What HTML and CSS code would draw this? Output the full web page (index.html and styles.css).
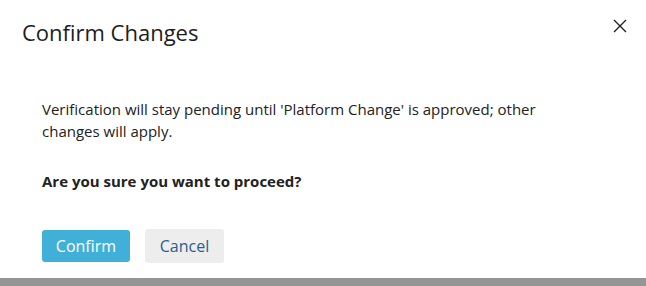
FILE: index.html
```html
<!DOCTYPE html>
<html lang="en">
<head>
    <meta charset="UTF-8">
    <title>Confirm Changes</title>
    <link rel="stylesheet" href="styles.css">
</head>
<body>

<div class="modal">
    <div class="modal-header">
        <h2>Confirm Changes</h2>
        <button class="close-button" aria-label="Close">
            <svg width="14" height="14" viewBox="0 0 14 14">
                <path d="M1 1 L13 13 M13 1 L1 13" stroke="#222" stroke-width="1.4" fill="none"/>
            </svg>
        </button>
    </div>

    <div class="modal-body">
        <p>Verification will stay pending until 'Platform Change' is approved; other changes will apply.</p>
        <p class="question">Are you sure you want to proceed?</p>
    </div>

    <div class="modal-footer">
        <button class="btn-confirm">Confirm</button>
        <button class="btn-cancel">Cancel</button>
    </div>
</div>
<div class="backdrop-strip"></div>

</body>
</html>
```

FILE: styles.css
```css
body {
    margin: 0;
    background-color: #FFF;
    font-family: "Open Sans", sans-serif;
    color: #222;
}
.modal {
    height: 278px;
    box-sizing: border-box;
    background-color: #FFF;
}
.modal-header {
    display: flex;
    justify-content: space-between;
    align-items: flex-start;
    padding: 17px 19px 0 22px;
}
.modal-header h2 {
    margin: 0;
    font-size: 22px;
    font-weight: 400;
    line-height: 30px;
    color: #1d1d1d;
}
.close-button {
    border: none;
    background: none;
    padding: 0;
    margin-top: 2px;
    width: 14px;
    height: 14px;
    cursor: pointer;
}
.modal-body {
    padding: 51px 42px 0 42px;
    font-size: 15px;
    line-height: 22px;
}
.modal-body p {
    margin: 0 0 28px 0;
    max-width: 540px;
}
.question {
    font-weight: 700;
}
.modal-footer {
    display: flex;
    align-items: center;
    gap: 15px;
    padding: 9px 42px 0 42px;
}
.modal-footer button {
    font-family: inherit;
    font-size: 16px;
    border: none;
    border-radius: 3px;
    cursor: pointer;
}
.btn-confirm {
    width: 88px;
    height: 32px;
    background-color: #41B0D8;
    color: #FFF;
}
.btn-cancel {
    width: 79px;
    height: 34px;
    background-color: #EDEDED;
    color: #2A5F8C;
}
.backdrop-strip {
    height: 8px;
    background-color: #959595;
}
```
